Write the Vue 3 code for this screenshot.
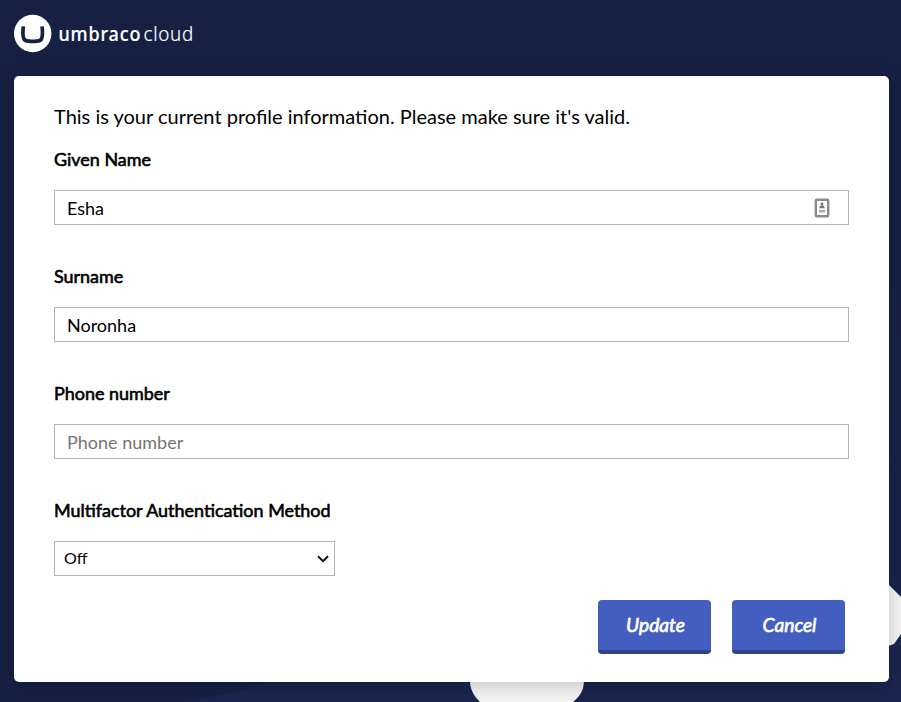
<script setup>
import { ref } from 'vue'

const fields = ref([
  { id: 'given-name', label: 'Given Name', value: 'Esha', contact: true },
  { id: 'surname', label: 'Surname', value: 'Noronha' },
  { id: 'phone', label: 'Phone number', value: '', placeholder: 'Phone number' }
])
const method = ref('Off')
</script>

<template>
  <div class="page">
    <svg class="backdrop" viewBox="0 0 901 702" aria-hidden="true">
      <defs>
        <linearGradient id="edge" x1="0" y1="0" x2="0" y2="1">
          <stop offset="0" stop-color="#162043" />
          <stop offset="1" stop-color="#1b264f" />
        </linearGradient>
      </defs>
      <path d="M180 702Q230 695 275 680H901V702Z" fill="#1b264f" />
      <path d="M889 230H901V682H889Z" fill="url(#edge)" />
      <path d="M470 680C470 691 475 697 480 702H573C579 697 584 691 584 680Z" fill="#f5f5f5" />
      <path d="M885 582L889 585L901 597V634L894 644Q890 646 885 646Z" fill="#f5f5f5" />
    </svg>
    <header class="header">
      <svg class="logo" width="182" height="40" viewBox="0 0 182 40">
        <circle cx="18.7" cy="19.5" r="18.7" fill="#fff" />
        <path d="M7.6 12.2L11.2 12.6C10.6 17 10.6 21 11.3 23.6C12 25.3 14 25.5 18.7 25.5S25.4 25.3 26.1 23.6C26.8 21 26.8 17 26.2 12.6L29.8 12.2C30.6 17 30.5 21.5 29.4 25C28.3 28.5 25.5 29.2 18.7 29.2S9.1 28.5 8 25C6.9 21.5 6.8 17 7.6 12.2Z" fill="#162043" />
        <g transform="translate(44.5 0) scale(0.9 1)">
          <text class="brand" x="0" y="26.7" textLength="91" lengthAdjust="spacing">umbraco</text>
        </g>
        <g transform="translate(129.5 0) scale(0.94 1)">
          <text class="product" x="0" y="26.7" textLength="53" lengthAdjust="spacing">cloud</text>
        </g>
      </svg>
    </header>
    <main class="card">
      <p class="intro">This is your current profile information. Please make sure it's valid.</p>
      <div v-for="f in fields" :key="f.id" class="field">
        <label class="label" :for="f.id">{{ f.label }}</label>
        <div class="control">
          <input :id="f.id" v-model="f.value" class="input" type="text" :placeholder="f.placeholder" />
          <svg v-if="f.contact" class="contact" width="16" height="20" viewBox="0 0 16 20">
            <rect x="1.8" y="1.8" width="12.4" height="16.4" rx="1" fill="#fff" stroke="#8c8c8c" stroke-width="2.4" />
            <circle cx="8" cy="6" r="1.4" fill="#777" />
            <path d="M5.3 10.2Q5.5 7.2 8 7.2T10.7 10.2Z" fill="#777" />
            <path d="M5 13.2H11" stroke="#aaa" stroke-width="2.6" />
          </svg>
        </div>
      </div>
      <div class="field last">
        <label class="label" for="method">Multifactor Authentication Method</label>
        <div class="control narrow">
          <select id="method" v-model="method" class="input select">
            <option>Off</option>
          </select>
          <svg class="chevron" width="12" height="8" viewBox="0 0 12 8">
            <path d="M1 1.2L6 6.2L11 1.2" fill="none" stroke="#111" stroke-width="2" />
          </svg>
        </div>
      </div>
      <div class="actions">
        <button class="button" type="button">Update</button>
        <button class="button" type="button">Cancel</button>
      </div>
    </main>
  </div>
</template>

<style>
body {
  margin: 0;
  background: #162043;
}
</style>

<style scoped>
.page {
  position: relative;
  box-sizing: border-box;
  height: 702px;
  padding: 14px 12px 20px 14px;
  overflow: hidden;
  background: #162043;
  color: #000;
  font-family: Lato, sans-serif;
}
.backdrop {
  position: absolute;
  inset: 0;
  width: 901px;
  height: 702px;
}
.header {
  position: relative;
  height: 62px;
}
.logo {
  display: block;
}
.brand,
.product {
  fill: #fff;
  font-family: "Noto Sans", sans-serif;
  font-size: 20px;
}
.brand {
  font-weight: 500;
  stroke: #fff;
  stroke-width: 0.2px;
}
.product {
  font-weight: 300;
  stroke: #fff;
  stroke-width: 0.2px;
}
.card {
  position: relative;
  box-sizing: border-box;
  height: 606px;
  padding: 27px 40px 28px;
  border-radius: 5px;
  background: #fff;
  box-shadow: 0 4px 20px rgba(0, 0, 0, 0.2);
}
.intro {
  height: 28px;
  margin: 0 0 15px;
  font-size: 20px;
  line-height: 26px;
  white-space: nowrap;
}
.field {
  height: 117px;
}
.field.last {
  height: 103px;
}
.label {
  display: block;
  width: max-content;
  height: 28px;
  margin-bottom: 16px;
  font-size: 17.95px;
  line-height: 26px;
  -webkit-text-stroke: 0.6px #000;
  white-space: nowrap;
}
.control {
  position: relative;
  height: 35px;
}
.narrow {
  width: 281px;
}
.input {
  display: block;
  box-sizing: border-box;
  width: 100%;
  height: 35px;
  margin: 0;
  padding: 1px 12px;
  border: 1px solid #b5b5b5;
  border-radius: 0;
  outline: none;
  background: #fff;
  color: #000;
  font-family: Lato, sans-serif;
  font-size: 18px;
}
.input::placeholder {
  color: #757575;
  opacity: 1;
}
.select {
  appearance: none;
  padding: 0 9px 2px;
  font-size: 16px;
}
.contact {
  position: absolute;
  top: 8px;
  right: 19px;
}
.chevron {
  position: absolute;
  top: 14px;
  right: 6px;
}
.actions {
  display: flex;
  justify-content: flex-end;
  gap: 21px;
  padding-right: 4px;
}
.button {
  box-sizing: border-box;
  width: 113px;
  height: 54px;
  padding: 0 0 1px 2px;
  border: 0;
  border-bottom: 4px solid #30438b;
  border-radius: 4px;
  background: #435ebe;
  color: #fff;
  font-family: Lato, sans-serif;
  font-size: 19.2px;
  font-style: italic;
  -webkit-text-stroke: 0.7px #fff;
}
</style>
